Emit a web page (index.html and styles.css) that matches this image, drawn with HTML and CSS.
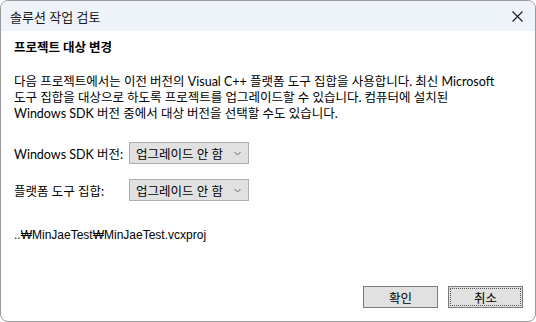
FILE: index.html
```html
<!DOCTYPE html>
<html lang="ko">

<head>
    <meta charset="UTF-8">
    <link rel="stylesheet" href="styles.css">
    <title>솔루션 작업 검토</title>
</head>

<body>
    <div class="window">
        <div class="titlebar">
            <span class="title">솔루션 작업 검토</span>
            <svg class="close" width="11" height="11" viewBox="0 0 11 11">
                <path d="M0.5 0.5 L10.5 10.5 M10.5 0.5 L0.5 10.5" stroke="#1a1a1a" stroke-width="1.1" fill="none" />
            </svg>
        </div>
        <div class="content">
            <p class="heading">프로젝트 대상 변경</p>
            <p class="desc">다음 프로젝트에서는 이전 버전의 Visual C++ 플랫폼 도구 집합을 사용합니다. 최신 Microsoft<br>
                도구 집합을 대상으로 하도록 프로젝트를 업그레이드할 수 있습니다. 컴퓨터에 설치된<br>
                Windows SDK 버전 중에서 대상 버전을 선택할 수도 있습니다.</p>

            <div class="field first">
                <span class="label">Windows SDK 버전:</span>
                <div class="combo">
                    <span>업그레이드 안 함</span>
                    <svg width="7" height="5" viewBox="0 0 7 5">
                        <path d="M0.5 1 L3.5 4 L6.5 1" stroke="#666" stroke-width="1" fill="none" />
                    </svg>
                </div>
            </div>
            <div class="field">
                <span class="label">플랫폼 도구 집합:</span>
                <div class="combo">
                    <span>업그레이드 안 함</span>
                    <svg width="7" height="5" viewBox="0 0 7 5">
                        <path d="M0.5 1 L3.5 4 L6.5 1" stroke="#666" stroke-width="1" fill="none" />
                    </svg>
                </div>
            </div>

            <p class="path">..₩MinJaeTest₩MinJaeTest.vcxproj</p>
        </div>
        <div class="buttons">
            <button class="btn">확인</button>
            <button class="btn focus">취소</button>
        </div>
    </div>
</body>

</html>
```

FILE: styles.css
```css
body {
    margin: 0;
    font-family: "Segoe UI", Lato, "Noto Sans CJK KR", sans-serif;
    font-size: 12.5px;
    color: #000000;
    background: #ffffff;
}

.window {
    width: 536px;
    height: 322px;
    box-sizing: border-box;
    border: 1px solid #9a9a9a;
    border-radius: 8px;
    overflow: hidden;
    display: flex;
    flex-direction: column;
    background: #ffffff;
}

.titlebar {
    height: 30px;
    background: #eff3fa;
    display: flex;
    align-items: center;
    justify-content: space-between;
    padding: 0 12px 0 9px;
    flex-shrink: 0;
}

.title {
    color: #1a1a1a;
    font-size: 13px;
}

.close {
    display: block;
}

.content {
    padding: 0 13px;
    flex: 1;
}

.heading {
    font-weight: bold;
    margin: 9px 0 0;
    line-height: 16px;
}

.desc {
    margin: 18px 0 0;
    line-height: 16px;
}

.field {
    display: flex;
    align-items: center;
    margin-top: 15px;
}

.field.first {
    margin-top: 20px;
}

.label {
    width: 115px;
}

.combo {
    width: 120px;
    height: 22px;
    box-sizing: border-box;
    background: #e1e1e1;
    border: 1px solid #adadad;
    display: flex;
    align-items: center;
    justify-content: space-between;
    padding: 0 7px 0 6px;
}

.path {
    margin: 26px 0 0;
    line-height: 16px;
    font-family: "Liberation Sans", "Noto Sans CJK KR", sans-serif;
    font-size: 12px;
}

.buttons {
    display: flex;
    justify-content: flex-end;
    gap: 10px;
    padding: 0 12px 13px 0;
}

.btn {
    font-family: "Segoe UI", Lato, "Noto Sans CJK KR", sans-serif;
    font-size: 12.5px;
    width: 75px;
    height: 22px;
    background: #e1e1e1;
    border: 1px solid #7a7a7a;
    padding: 0;
    color: #000000;
}

.btn.focus {
    outline: 1px dotted #555555;
    outline-offset: -3px;
}
```
